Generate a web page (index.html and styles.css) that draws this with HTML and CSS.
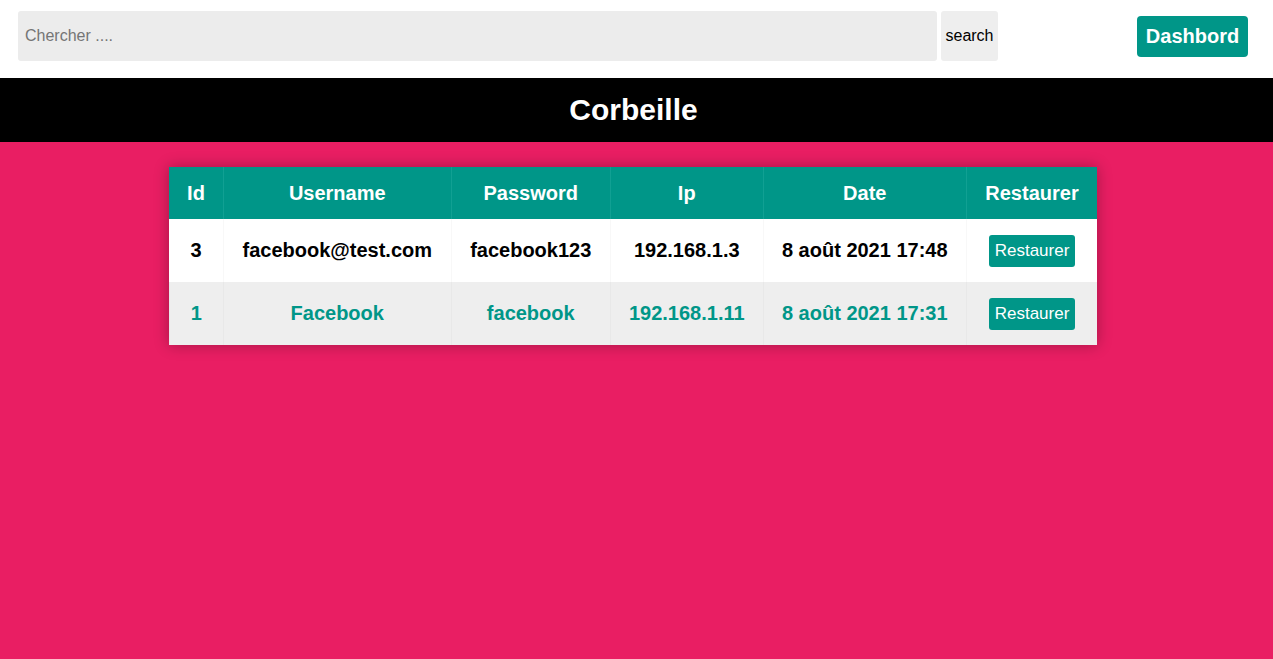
FILE: index.html
```html
<!DOCTYPE html>
<html lang="fr">
<head>
<meta charset="utf-8">
<title>Corbeille</title>
<link rel="stylesheet" href="styles.css">
</head>
<body>
<header class="topbar">
  <form class="search">
    <input class="search-input" type="text" placeholder="Chercher ....">
    <button class="search-btn" type="button">search</button>
  </form>
  <a class="dash-btn" href="#">Dashbord</a>
</header>
<div class="title-bar"><h1>Corbeille</h1></div>
<main class="content">
  <table class="trash">
    <colgroup>
      <col class="c-id"><col class="c-user"><col class="c-pass"><col class="c-ip"><col class="c-date"><col class="c-act">
    </colgroup>
    <thead>
      <tr><th>Id</th><th>Username</th><th>Password</th><th>Ip</th><th>Date</th><th>Restaurer</th></tr>
    </thead>
    <tbody>
      <tr>
        <td>3</td><td>facebook@test.com</td><td>facebook123</td><td>192.168.1.3</td><td>8 août 2021 17:48</td>
        <td><button class="restore-btn" type="button">Restaurer</button></td>
      </tr>
      <tr class="alt">
        <td>1</td><td>Facebook</td><td>facebook</td><td>192.168.1.11</td><td>8 août 2021 17:31</td>
        <td><button class="restore-btn" type="button">Restaurer</button></td>
      </tr>
    </tbody>
  </table>
</main>
</body>
</html>
```
FILE: styles.css
```css
* { box-sizing: border-box; }
html, body { height: 100%; }
body {
  margin: 0;
  font-family: "Liberation Sans", Arial, sans-serif;
  background: #e91e63;
  display: flex;
  flex-direction: column;
}
.topbar {
  background: #fff;
  height: 78px;
  display: flex;
  align-items: flex-start;
  padding: 11px 25px 0 18px;
}
.search {
  display: flex;
  gap: 4px;
  margin: 0;
}
.search-input {
  width: 919px;
  height: 50px;
  border: none;
  border-radius: 3px;
  background: #ececec;
  padding: 0 7px;
  font: 16px "Liberation Sans", Arial, sans-serif;
  color: #333;
  outline: none;
}
.search-input::placeholder { color: #757575; }
.search-btn {
  width: 57px;
  height: 50px;
  border: none;
  border-radius: 3px;
  background: #eeeeee;
  padding: 0;
  font: 16px "Liberation Sans", Arial, sans-serif;
  color: #000;
}
.dash-btn {
  margin-left: auto;
  margin-top: 5px;
  width: 111px;
  height: 41px;
  display: flex;
  align-items: center;
  justify-content: center;
  background: #009688;
  color: #fff;
  border-radius: 4px;
  font-weight: bold;
  font-size: 20px;
  text-decoration: none;
}
.title-bar {
  background: #000;
  height: 64px;
  display: flex;
  align-items: center;
  justify-content: center;
  padding-right: 6px;
}
.title-bar h1 {
  margin: 0;
  color: #fff;
  font-size: 30px;
  font-weight: bold;
}
.content {
  flex: 1;
  padding-top: 25px;
  display: flex;
  justify-content: center;
  padding-right: 7px;
}
.trash {
  width: 928px;
  height: 178px;
  table-layout: fixed;
  border-collapse: collapse;
  box-shadow: 0 0 14px rgba(0,0,0,0.3);
  font-size: 20px;
  font-weight: bold;
  text-align: center;
}
.c-id { width: 54px; }
.c-user { width: 228px; }
.c-pass { width: 159px; }
.c-ip { width: 153px; }
.c-date { width: 203px; }
.c-act { width: 131px; }
.trash th {
  background: #009688;
  color: #fff;
  height: 52px;
  padding: 0;
  border-left: 1px solid #11a093;
}
.trash th:first-child, .trash td:first-child { border-left: none; }
.trash td {
  height: 63px;
  padding: 0;
  background: #fff;
  color: #000;
  border-left: 1px solid #f8f8f8;
}
.trash tr.alt td {
  background: #eeeeee;
  color: #009688;
  border-left: 1px solid #e8e8e8;
}
.restore-btn {
  width: 86px;
  height: 32px;
  border: none;
  border-radius: 3px;
  background: #009688;
  color: #fff;
  font: 17px "Liberation Sans", Arial, sans-serif;
  padding: 0;
}
```
